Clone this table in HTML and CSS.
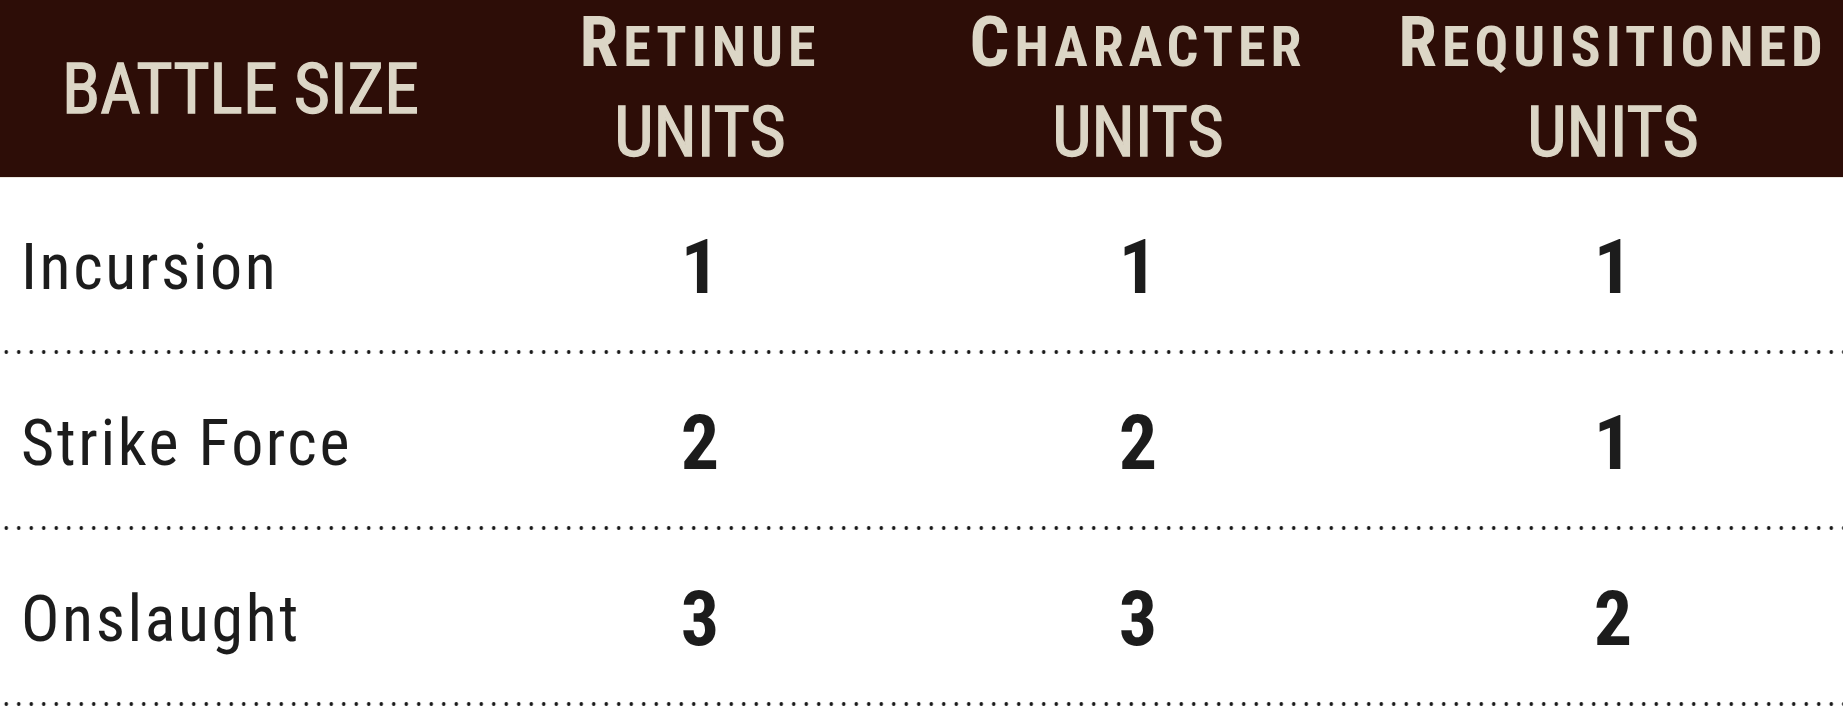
FILE: index.html
```html
<!DOCTYPE html>
<html lang="en">
<head>
<meta charset="utf-8">
<title>Battle Size</title>
<link rel="stylesheet" href="styles.css">
</head>
<body>
<div class="table">
  <div class="row head">
    <div class="cell label-head">BATTLE SIZE</div>
    <div class="cell col-head"><span class="l1"><span class="cap">R</span>etinue</span><span class="l2">UNITS</span></div>
    <div class="cell col-head"><span class="l1"><span class="cap">C</span>haracter</span><span class="l2">UNITS</span></div>
    <div class="cell col-head"><span class="l1"><span class="cap">R</span>equisitioned</span><span class="l2">UNITS</span></div>
  </div>
  <div class="row body">
    <div class="cell name">Incursion</div>
    <div class="cell num">1</div>
    <div class="cell num">1</div>
    <div class="cell num">1</div>
  </div>
  <div class="row body">
    <div class="cell name">Strike Force</div>
    <div class="cell num">2</div>
    <div class="cell num">2</div>
    <div class="cell num">1</div>
  </div>
  <div class="row body">
    <div class="cell name">Onslaught</div>
    <div class="cell num">3</div>
    <div class="cell num">3</div>
    <div class="cell num">2</div>
  </div>
</div>
</body>
</html>
```
FILE: styles.css
```css
html, body {
  margin: 0;
  background: #ffffff;
}

.table {
  width: 1843px;
  font-family: "Roboto Condensed", "Roboto", sans-serif;
}

.row {
  display: grid;
  grid-template-columns: 507px 386px 490px 460px;
}

.head {
  height: 178px;
  background: #2d0d07;
  color: #dcd6c6;
  border-bottom: 1px solid #ebe7df;
  box-sizing: border-box;
}

.cell {
  display: flex;
  align-items: center;
}

.label-head {
  padding-left: 62px;
  font-size: 70px;
  line-height: 85px;
  font-weight: 400;
  -webkit-text-stroke: 1.3px #dcd6c6;
}

.col-head {
  flex-direction: column;
  justify-content: center;
  align-items: center;
  padding-bottom: 4px;
}

.l1 {
  font-size: 56px;
  line-height: 85px;
  font-weight: 700;
  text-transform: uppercase;
  letter-spacing: 5px;
  white-space: nowrap;
}

.l1 .cap {
  font-size: 70px;
}

.l2 {
  font-size: 70px;
  line-height: 85px;
  font-weight: 400;
  -webkit-text-stroke: 1.3px #dcd6c6;
}

.body {
  height: 176px;
  box-sizing: border-box;
  padding-bottom: 3px;
  color: #1c1c1c;
  background-image: radial-gradient(circle, #1a1a1a 1.6px, rgba(26,26,26,0) 2.1px);
  background-size: 12.5px 4px;
  background-repeat: repeat-x;
  background-position: 0 100%;
}

.name {
  padding-left: 21px;
  padding-top: 6px;
  font-size: 64px;
  letter-spacing: 2.6px;
}

.num {
  justify-content: center;
  padding-top: 4px;
  font-size: 76px;
  font-weight: 700;
}
```
